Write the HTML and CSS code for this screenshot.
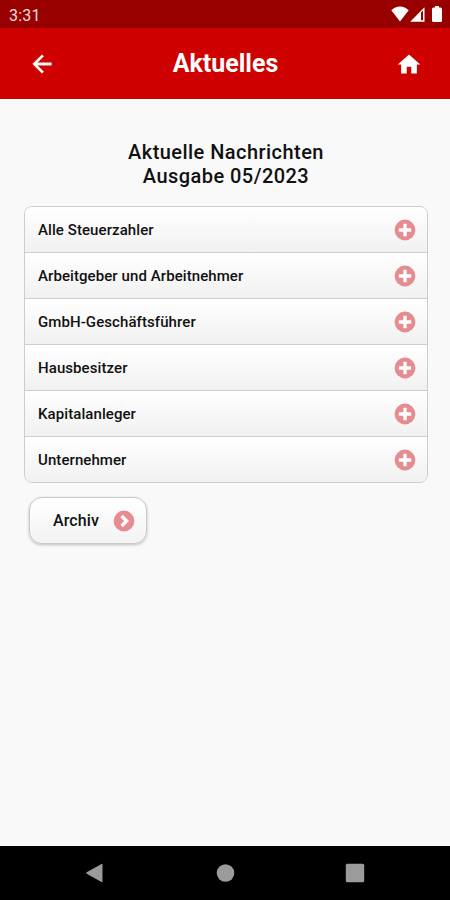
FILE: index.html
```html
<!DOCTYPE html>
<html lang="de">
<head>
    <meta charset="UTF-8">
    <meta name="viewport" content="width=device-width, initial-scale=1.0">
    <title>Aktuelles</title>
    <link rel="stylesheet" href="styles.css">
</head>
<body>
<svg class="sprite" aria-hidden="true">
    <symbol id="plus" viewBox="0 0 22 22">
        <circle cx="11" cy="11" r="10.4" fill="#e68c90"/>
        <path d="M11 4.8v12.400M4.800 11h12.400" stroke="#fff" stroke-width="3.300"/>
    </symbol>
</svg>
<div class="statusbar">
    <span class="time">3:31</span>
    <div class="status-icons">
        <svg class="wifi" viewBox="0 0 18 16"><path d="M9 15.500L.3 4.300C2.700 2 5.700.6 9 .6s6.300 1.400 8.700 3.700z" fill="#fff"/></svg>
        <svg class="signal" viewBox="0 0 15 15"><path fill-rule="evenodd" d="M14.500.3v14.400H.200zM11 5.500v7.700h2V3.500z" fill="#fff"/></svg>
        <svg class="battery" viewBox="0 0 10 16"><path d="M3 0h4v1.500h1.500Q10 1.500 10 3v11.500Q10 16 8.500 16h-7Q0 16 0 14.500V3q0-1.500 1.500-1.500H3z" fill="#fff"/></svg>
    </div>
</div>
<header class="header">
    <a class="back" href="#" aria-label="Zurück">
        <svg viewBox="0 0 24 24"><path d="M20 11H7.830l5.590-5.590L12 4l-8 8 8 8 1.410-1.410L7.830 13H20v-2z" fill="#fff" stroke="#fff" stroke-width=".4"/></svg>
    </a>
    <h1>Aktuelles</h1>
    <a class="home" href="#" aria-label="Startseite">
        <svg viewBox="0 0 24 24"><path d="M10 20v-6h4v6h5v-8h3L12 3 2 12h3v8z" fill="#fff"/></svg>
    </a>
</header>
<main class="content">
    <h2>Aktuelle Nachrichten<br>Ausgabe 05/2023</h2>
    <ul class="list">
        <li><span>Alle Steuerzahler</span><svg class="icon"><use href="#plus"/></svg></li>
        <li><span>Arbeitgeber und Arbeitnehmer</span><svg class="icon"><use href="#plus"/></svg></li>
        <li><span>GmbH-Geschäftsführer</span><svg class="icon"><use href="#plus"/></svg></li>
        <li><span>Hausbesitzer</span><svg class="icon"><use href="#plus"/></svg></li>
        <li><span>Kapitalanleger</span><svg class="icon"><use href="#plus"/></svg></li>
        <li><span>Unternehmer</span><svg class="icon"><use href="#plus"/></svg></li>
    </ul>
    <a class="archive" href="#">
        <span>Archiv</span>
        <svg class="icon" viewBox="0 0 22 22">
            <circle cx="11" cy="11" r="10.400" fill="#e68c90"/>
            <path d="M8.600 6l5 5-5 5" fill="none" stroke="#fff" stroke-width="3.400"/>
        </svg>
    </a>
</main>
<nav class="navbar">
    <svg viewBox="0 0 20 20"><path d="M1.700 9.300L16.500.9q1-.5 1 .6v17q0 1.100-1 .6L1.700 10.700q-1.200-.7 0-1.400z" fill="#9b9b9b"/></svg>
    <svg viewBox="0 0 20 20"><circle cx="10.500" cy="10" r="8.800" fill="#9b9b9b"/></svg>
    <svg viewBox="0 0 20 20"><rect x=".8" y=".8" width="18.400" height="18.400" rx="1.500" fill="#9b9b9b"/></svg>
</nav>
</body>
</html>
```
FILE: styles.css
```css
* {
    box-sizing: border-box;
}

body {
    margin: 0;
    height: 100vh;
    display: flex;
    flex-direction: column;
    background: #f9f9f9;
    color: #111;
    font-family: Roboto, "Liberation Sans", sans-serif;
    overflow: hidden;
}

svg {
    display: block;
    flex: none;
}
a {
    color: inherit;
    text-decoration: none;
}
.sprite {
    display: none;
}

.statusbar {
    flex: none;
    height: 28px;
    padding: 0 8px 0 9px;
    display: flex;
    align-items: center;
    justify-content: space-between;
    background: #980000;
}
.time {
    color: #f4dede;
    font-size: 16px;
    line-height: 20px;
    padding-top: 3px;
    letter-spacing: .2px;
}
.status-icons {
    display: flex;
    align-items: flex-end;
}
.wifi {
    width: 18px;
    height: 16px;
}
.signal {
    width: 15px;
    height: 15px;
    margin: 0 7px 0 1px;
}
.battery {
    width: 10px;
    height: 16px;
}

.header {
    flex: none;
    height: 71px;
    padding: 0 27px 0 28px;
    display: flex;
    align-items: center;
    justify-content: space-between;
    background: #ce0000;
}
.header h1 {
    margin: 0;
    color: #fff;
    font-size: 25px;
    font-weight: 700;
    line-height: 30px;
}
.back svg,
.home svg {
    width: 28px;
    height: 28px;
}
.home svg {
    padding-top: 1px;
}

.content {
    flex: 1;
    padding: 40px 22px 0 24px;
    border-top: 1px solid #fff;
}
.content h2 {
    margin: 0 0 18px;
    text-align: center;
    font-size: 20px;
    font-weight: 500;
    line-height: 24px;
    letter-spacing: .45px;
}
.list {
    margin: 0;
    padding: 0;
    list-style: none;
    border: 1px solid #cdcdcd;
    border-radius: 8px;
    overflow: hidden;
}
.list li {
    height: 46px;
    padding: 0 11px 0 13px;
    display: flex;
    align-items: center;
    justify-content: space-between;
    border-bottom: 1px solid #cdcdcd;
    background: linear-gradient(#fff, #f1f1f1);
    font-size: 15px;
    font-weight: 500;
    letter-spacing: .08px;
}
.list li span {
    padding-top: 1px;
}
.list li:last-child {
    height: 45px;
    border-bottom: 0;
}
.icon {
    width: 22px;
    height: 22px;
}

.archive {
    width: 118px;
    height: 47px;
    margin: 14px 0 0 5px;
    padding: 0 11px 0 23px;
    display: flex;
    align-items: center;
    justify-content: space-between;
    border: 1px solid #c9c9c9;
    border-radius: 13px;
    background: linear-gradient(#fff, #f3f3f3);
    box-shadow: 0 1px 3px rgba(0, 0, 0, .25);
    font-size: 16px;
    font-weight: 500;
    letter-spacing: .1px;
}

.navbar {
    flex: none;
    height: 54px;
    padding: 0 85px;
    display: flex;
    align-items: center;
    justify-content: space-between;
    background: #000;
}
.navbar svg {
    width: 20px;
    height: 20px;
}
```
